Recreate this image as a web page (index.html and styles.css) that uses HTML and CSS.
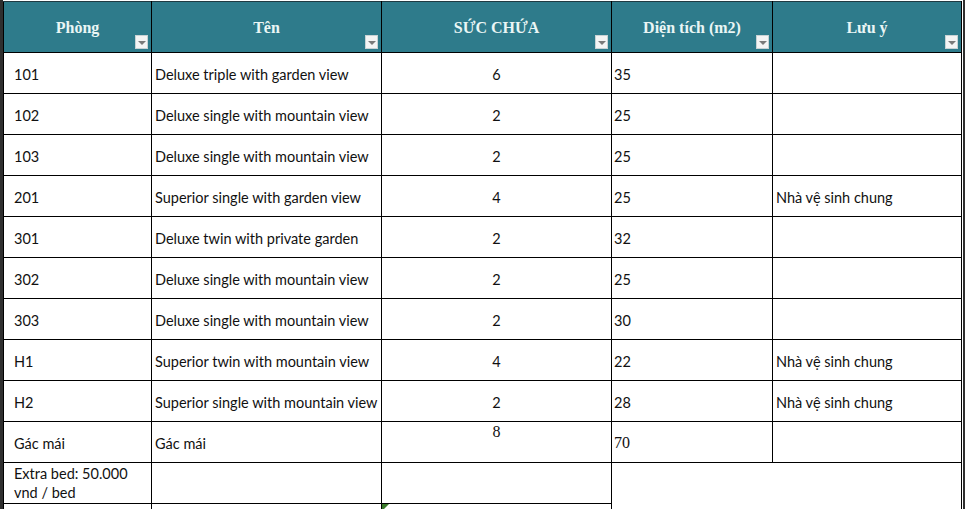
FILE: index.html
```html
<!DOCTYPE html>
<html lang="vi">
<head>
<meta charset="utf-8">
<title>Phòng</title>
<link rel="stylesheet" href="styles.css">
</head>
<body>
<div class="sheet">
  <table class="grid">
    <colgroup>
      <col class="c1"><col class="c2"><col class="c3"><col class="c4"><col class="c5">
    </colgroup>
    <thead>
      <tr class="head">
        <th>Phòng<span class="filter"></span></th>
        <th>Tên<span class="filter"></span></th>
        <th>SỨC CHỨA<span class="filter"></span></th>
        <th>Diện tích (m2)<span class="filter"></span></th>
        <th>Lưu ý<span class="filter"></span></th>
      </tr>
    </thead>
    <tbody>
      <tr><td class="room">101</td><td class="name">Deluxe triple with garden view</td><td class="cap">6</td><td class="area">35</td><td class="note"></td></tr>
      <tr><td class="room">102</td><td class="name">Deluxe single with mountain view</td><td class="cap">2</td><td class="area">25</td><td class="note"></td></tr>
      <tr><td class="room">103</td><td class="name">Deluxe single with mountain view</td><td class="cap">2</td><td class="area">25</td><td class="note"></td></tr>
      <tr><td class="room">201</td><td class="name">Superior single with garden view</td><td class="cap">4</td><td class="area">25</td><td class="note">Nhà vệ sinh chung</td></tr>
      <tr><td class="room">301</td><td class="name">Deluxe twin with private garden</td><td class="cap">2</td><td class="area">32</td><td class="note"></td></tr>
      <tr><td class="room">302</td><td class="name">Deluxe single with mountain view</td><td class="cap">2</td><td class="area">25</td><td class="note"></td></tr>
      <tr><td class="room">303</td><td class="name">Deluxe single with mountain view</td><td class="cap">2</td><td class="area">30</td><td class="note"></td></tr>
      <tr><td class="room">H1</td><td class="name">Superior twin with mountain view</td><td class="cap">4</td><td class="area">22</td><td class="note">Nhà vệ sinh chung</td></tr>
      <tr><td class="room">H2</td><td class="name">Superior single with mountain view</td><td class="cap">2</td><td class="area">28</td><td class="note">Nhà vệ sinh chung</td></tr>
      <tr><td class="room">Gác mái</td><td class="name">Gác mái</td><td class="cap serif top">8</td><td class="area serif">70</td><td class="note"></td></tr>
      <tr><td class="room wrap">Extra bed: 50.000 vnd / bed</td><td class="name"></td><td class="cap"></td><td class="merged" colspan="2" rowspan="2"></td></tr>
      <tr class="tail"><td class="room"></td><td class="name"></td><td class="cap mark"><span class="tri"></span></td></tr>
    </tbody>
  </table>
</div>
</body>
</html>
```

FILE: styles.css
```css
html, body {
  margin: 0;
  padding: 0;
  background: #ffffff;
  overflow: hidden;
}
body {
  width: 965px;
  height: 509px;
}
.sheet {
  height: 509px;
  border-left: 3px solid #2f2f2f;
  border-right: 2px solid #2f2f2f;
  box-sizing: border-box;
  padding-top: 1px;
  background: #ffffff;
  overflow: hidden;
}
.grid {
  border-collapse: collapse;
  table-layout: fixed;
  width: 958px;
  font-family: Lato, "Noto Sans", sans-serif;
  font-size: 14.5px;
  color: #111111;
}
.c1 { width: 148px; }
.c2 { width: 230px; }
.c3 { width: 230px; }
.c4 { width: 161px; }
.c5 { width: 189px; }
.grid th, .grid td {
  border: 1px solid #000000;
  padding: 0;
  overflow: hidden;
  white-space: nowrap;
}
.head th {
  position: relative;
  height: 48px;
  background: #2e7b8b;
  color: #eaf6f5;
  font-family: "Liberation Serif", "DejaVu Serif", serif;
  font-weight: bold;
  font-size: 16px;
  text-align: center;
  vertical-align: middle;
  padding-top: 2px;
  border-top: 1px solid #1f3a42;
}
.filter {
  position: absolute;
  right: 3px;
  bottom: 3px;
  width: 13px;
  height: 14px;
  background: #f4f4f4;
  border: 1px solid #c8d2d4;
  box-sizing: border-box;
}
.filter::after {
  content: "";
  position: absolute;
  left: 2px;
  top: 5px;
  border-left: 4px solid transparent;
  border-right: 4px solid transparent;
  border-top: 4px solid #7a7a7a;
}
.grid tbody tr { height: 41px; }
.grid td { vertical-align: middle; padding-top: 2px; }
.room { padding-left: 10px !important; }
.name { padding-left: 3px !important; }
.cap { text-align: center; }
.area { padding-left: 2px !important; }
.note { padding-left: 3px !important; }
.serif {
  font-family: "Liberation Serif", "Times New Roman", serif;
  font-size: 16px;
}
.cap.top { vertical-align: top; padding-top: 1px; }
.wrap {
  white-space: normal !important;
  line-height: 19px;
  vertical-align: top !important;
  padding-top: 1px !important;
}
.merged { border-right: 1px solid #000000; }
.tail { height: 41px; }
.mark { position: relative; vertical-align: top; }
.tri {
  position: absolute;
  left: 0;
  top: 0;
  width: 0;
  height: 0;
  border-top: 7px solid #3a7a2a;
  border-right: 7px solid transparent;
}
```
